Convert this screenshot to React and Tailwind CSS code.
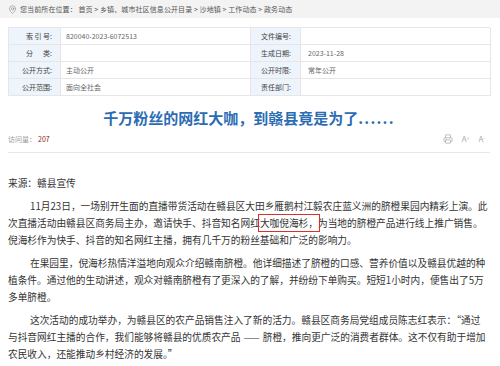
import React from "react";
import { MapPin, Printer } from "lucide-react";

const rows = [
  ["索 引 号:", "820040-2023-6072513", "文件编号:", ""],
  ["分\u3000\u00a0\u00a0类:", "", "生成日期:", "2023-11-28"],
  ["公开方式:", "主动公开", "公开时限:", "常年公开"],
  ["公开范围:", "面向全社会", "责任部门:", ""],
];

export default function App() {
  return (
    <div className="w-[500px] h-[366px] overflow-hidden bg-white font-['Noto_Sans_CJK_SC',sans-serif]">
      {/* breadcrumb */}
      <div className="h-[18px] bg-[#f3f3f3] flex items-center pl-[8px] text-[7px] text-[#555]">
        <MapPin size={9} strokeWidth={2} className="text-[#999]" />
        <span className="ml-[3px] tracking-[0.1px]">您当前所在位置： 首页 &gt; 乡镇、城市社区信息公开目录 &gt; 沙地镇 &gt; 工作动态 &gt; 政务动态</span>
      </div>

      <div className="pl-[8px] pr-[10px]">
        {/* info table */}
        <div className="mt-[9px] grid grid-cols-[52px_190px_50px_190px] border-t border-l border-[#e6e6e6] text-[7px] leading-[16px]">
          {rows.map((r, i) => (
            <React.Fragment key={i}>
              <div className="h-[17px] border-r border-b border-[#e6e6e6] bg-[#eef4fb] text-right pr-[8px] text-[#444] whitespace-pre">{r[0]}</div>
              <div className="h-[17px] border-r border-b border-[#e6e6e6] pl-[5px] text-[#666]">{r[1]}</div>
              <div className="h-[17px] border-r border-b border-[#e6e6e6] bg-[#eef4fb] text-right pr-[9px] text-[#444]">{r[2]}</div>
              <div className="h-[17px] border-r border-b border-[#e6e6e6] pl-[7px] text-[#666]">{r[3]}</div>
            </React.Fragment>
          ))}
        </div>

        {/* title */}
        <h1 className="mt-[12px] h-[20px] leading-[20px] text-center text-[15px] font-bold text-[#2b6cb3]">
          千万粉丝的网红大咖，到赣县竟是为了<span className="tracking-[1.2px]">......</span>
        </h1>

        {/* meta row */}
        <div className="mt-[5px] pb-[7px] border-b border-[#e8e8e8] flex items-center justify-between">
          <div className="h-[12px] leading-[12px] text-[7px] text-[#999]">
            访问量：<span className="ml-[2px] text-[#8b2a2a]">207</span>
          </div>
          <div className="flex items-center gap-[9px] pr-[5px] text-[#aaa] text-[8px] leading-[12px]">
            <Printer size={10} strokeWidth={1.8} />
            <span>A<sup className="text-[5px]">+</sup></span>
            <span>A<sup className="text-[5px]">-</sup></span>
          </div>
        </div>

        {/* body */}
        <div className="text-[9.7px] leading-[17px] text-[#333] w-[482px]">
          <p className="mt-[22px]">来源：赣县宣传</p>
          <p className="mt-[6px] indent-[22px]">
            11月23日，一场别开生面的直播带货活动在赣县区大田乡雁鹅村江毅农庄蓝义洲的脐橙果园内精彩上演。此次直播活动由赣县区商务局主办，邀请快手、抖音知名网红<span className="outline-[1.5px] outline-[#d9302c] outline-offset-[1px]">大咖倪海杉，</span>为当地的脐橙产品进行线上推广销售。倪海杉作为快手、抖音的知名网红主播，拥有几千万的粉丝基础和广泛的影响力。
          </p>
          <p className="mt-[6px] indent-[22px]">
            在果园里，倪海杉热情洋溢地向观众介绍赣南脐橙。他详细描述了脐橙的口感、营养价值以及赣县优越的种植条件。通过他的生动讲述，观众对赣南脐橙有了更深入的了解，并纷纷下单购买。短短1小时内，便售出了5万多单脐橙。
          </p>
          <p className="mt-[6px] indent-[22px]">
            这次活动的成功举办，为赣县区的农产品销售注入了新的活力。赣县区商务局党组成员陈志红表示：“通过与抖音网红主播的合作，我们能够将赣县的优质农产品<span className="px-[3px]">——</span>脐橙，推向更广泛的消费者群体。这不仅有助于增加农民收入，还能推动乡村经济的发展。”
          </p>
        </div>
      </div>
    </div>
  );
}
